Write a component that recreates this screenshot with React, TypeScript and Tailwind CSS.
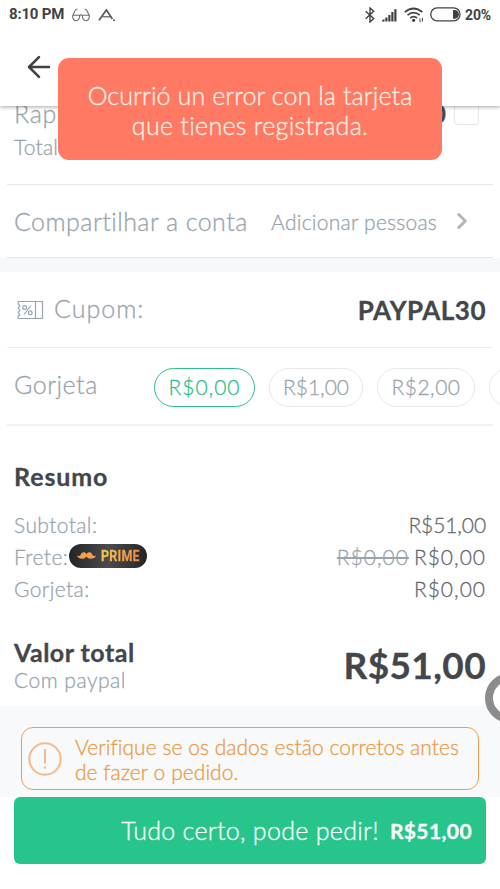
import { useState } from 'react';
import { ArrowLeft, ChevronRight } from 'lucide-react';

const GORJETAS = [
  { id: 0, label: 'R$0,00', style: 'w-[101px] tracking-[1px]' },
  { id: 1, label: 'R$1,00', style: 'w-[94px] tracking-[0px]' },
  { id: 2, label: 'R$2,00', style: 'w-[98px] tracking-[0.5px]' },
  { id: 3, label: '', style: 'w-[98px]' },
];

function StatusBar() {
  return (
    <div className="flex h-7 items-center pl-[9px] pr-[8px] pt-[1px] font-['Roboto',sans-serif] text-[15px] font-bold leading-none text-[#3f4244]">
      <span className="w-[55px] whitespace-nowrap tracking-[-0.2px]">8:10 PM</span>
      <svg className="ml-[8px]" width="18" height="14" viewBox="0 0 18 14" fill="none" stroke="#6b6e70" strokeWidth="1.1">
        <path d="M.6 7.300h7.200q1.200-.9 2.400 0h7.200c.3 7.200-6.700 7.200-7.200 0M.6 7.300c-.3 7.200 6.700 7.200 7.200 0M1 7L3.500 1.800 5.300 1M17 7L14.500 1.800 12.700 1" />
      </svg>
      <svg className="ml-[8px]" width="18" height="14" viewBox="0 0 18 14" fill="none" stroke="#55585a" strokeWidth="1.7">
        <path d="M1 12.300L8.400 2l6 9" />
        <path d="M4.500 8.800h8" strokeWidth="1.200" />
        <circle cx="16" cy="12.300" r="1" fill="#55585a" stroke="none" />
      </svg>
      <div className="ml-auto flex items-center">
        <svg width="10" height="16" viewBox="0 0 10 16" fill="none" stroke="#3f4244" strokeWidth="1.4">
          <path d="M.7 4.200l8 7.400L5 15V1l3.700 3.300-8 7.400" />
        </svg>
        <svg className="ml-[7px]" width="15" height="14" viewBox="0 0 15 14" fill="#3f4244">
          <path d="M0 13.500v-1.200l2.500-1.200v2.400zM3.300 9.600h2.200v3.900H3.300zM6.300 7h2.200v6.500H6.300zM9.300 4h2.200v9.500H9.300zM12.300 1.200h2.200v12.300h-2.200z" />
        </svg>
        <svg className="ml-[7px]" width="20" height="16" viewBox="0 0 20 16" fill="none" stroke="#3f4244" strokeWidth="1.7">
          <path d="M.8 5.200q8.800-7.400 17.600 0M3.500 8.200q6.100-5 12.200 0M6.200 11q3.400-2.700 6.800 0" />
          <circle cx="9.600" cy="13.300" r="1.600" fill="#3f4244" stroke="none" />
          <path d="M16 11.500v3.500M18.400 11v3.500" strokeWidth="1" />
        </svg>
        <svg className="ml-[6px]" width="31" height="15" viewBox="0 0 31 15" fill="none">
          <rect x=".8" y=".9" width="29.200" height="13" rx="6.300" stroke="#3f4244" strokeWidth="1.300" />
          <path d="M23 3h1.500a4.300 4.300 0 010 8.800H23z" fill="#3f4244" />
        </svg>
        <span className="ml-[4px] w-[27px] text-[14px] tracking-[-0.1px]">20%</span>
      </div>
    </div>
  );
}

function PrimeBadge() {
  return (
    <span className="flex h-6 w-[78px] items-center rounded-full bg-gradient-to-r from-[#252527] via-[#4b4c50] to-[#252527] pl-2">
      <svg width="19" height="8" viewBox="0 0 19 8" fill="#f3a04a">
        <path d="M9.500 2.200C8-.4 4.800-.2 3.800 2.500 3 4.400 1.400 4.200 0 3.600c1.300 4 7.500 4.200 9.500.9 2 3.300 8.200 3.100 9.500-.9-1.400.6-3 .8-3.800-1.100C14.200-.2 11-.4 9.500 2.200z" />
      </svg>
      <span className="ml-[5px] inline-block w-[46px] origin-left scale-x-[0.84] bg-gradient-to-r from-[#fbc94b] to-[#ee8347] bg-clip-text font-['Roboto',sans-serif] text-[15px] font-bold leading-none tracking-[0.2px] text-transparent">
        PRIME
      </span>
    </span>
  );
}

function Resumo() {
  return (
    <section className="h-[280px] px-[14px] pt-[36px]">
      <h2 className="text-[25px] font-bold leading-[28px] tracking-[0.9px] text-[#43474b]">Resumo</h2>
      <div className="mt-[19px] text-[21px] leading-8 tracking-[0.4px] text-[#99a5ad]">
        <div className="flex justify-between">
          <span>Subtotal:</span>
          <span className="tracking-[-0.1px] text-[#646a70]">R$51,00</span>
        </div>
        <div className="flex items-center">
          <span className="w-[55px] whitespace-nowrap">Frete:</span>
          <span className="-mt-[2px]">
            <PrimeBadge />
          </span>
          <span className="ml-auto tracking-[1px] line-through">R$0,00</span>
          <span className="ml-[5px] tracking-[1px] text-[#646a70]">R$0,00</span>
        </div>
        <div className="flex justify-between">
          <span>Gorjeta:</span>
          <span className="tracking-[1px] text-[#646a70]">R$0,00</span>
        </div>
      </div>
      <div className="mt-[33px] flex items-center justify-between">
        <div>
          <p className="text-[25px] font-bold leading-[28px] tracking-[0.5px] text-[#43474b]">Valor total</p>
          <p className="text-[21px] leading-[28px] tracking-[0.5px] text-[#99a5ad]">Com paypal</p>
        </div>
        <span className="-mt-[2px] text-[37px] font-bold leading-[52px] tracking-[0.4px] text-[#43474b]">R$51,00</span>
      </div>
    </section>
  );
}

export default function App() {
  const [gorjeta, setGorjeta] = useState(0);

  return (
    <div className="relative flex h-[889px] w-[500px] flex-col overflow-hidden bg-white font-['Lato',sans-serif] font-light [-webkit-text-stroke:0.3px]">
      <header className="relative z-10 h-[106px] shrink-0 bg-white shadow-[0_1px_4px_rgba(0,0,0,0.35)] [-webkit-text-stroke:0px]">
        <StatusBar />
        <button className="ml-[22px] mt-[22px] block text-[#3f4244]">
          <ArrowLeft className="h-[34px] w-[34px]" strokeWidth={1.8} />
        </button>
      </header>

      {/* Previous row, scrolled under the header */}
      <div className="flex h-[78px] shrink-0 justify-between pl-[14px] pr-[21px]">
        <div className="text-[#99a5ad]">
          <p className="-mt-[7px] text-[25px] leading-[28px] tracking-[0.7px]">Rap</p>
          <p className="mt-[6px] text-[21px] leading-[28px] tracking-[0.2px]">Total</p>
        </div>
        <div className="flex">
          <span className="mt-[-8px] text-[24px] font-bold leading-[32px] text-[#43474b]">0</span>
          <span className="ml-[8px] h-[19px] w-[25px] rounded-b border border-t-0 border-[#e6e7e8]" />
        </div>
      </div>

      <div className="mx-[7px] flex h-[74px] shrink-0 items-center border-y border-[#e3e5e6] pl-[7px] pr-[22px] text-[#99a5ad]">
        <span className="pt-[2px] text-[25px] tracking-[0.45px]">Compartilhar a conta</span>
        <span className="ml-auto pt-[2px] text-[21px] tracking-[0.25px]">Adicionar pessoas</span>
        <ChevronRight className="-mr-1 ml-[12px] h-[26px] w-[26px] text-[#b4b6b8]" strokeWidth={2.8} />
      </div>
      <div className="h-[14px] shrink-0 bg-[#f7f8f9]" />

      <div className="mx-[7px] flex h-[76px] shrink-0 items-center border-b border-[#eceeef] px-[7px] text-[#99a5ad]">
        <svg className="ml-[3px]" width="27" height="20" viewBox="0 0 27 20" fill="none" stroke="currentColor" strokeWidth="1.2">
          <path d="M1.200 1.500h24.300v17H1.200v-2.500l1.700-1-1.700-2.500 1.700-2-1.700-2.500 1.700-2-1.700-2zM18.500 1.500v17" />
          <path d="M14 5.500L7 14.500" />
          <circle cx="7.600" cy="7.500" r="1.900" />
          <circle cx="13.200" cy="12.700" r="1.900" />
        </svg>
        <span className="-mt-[2px] ml-[10px] text-[25px] tracking-[1px]">Cupom:</span>
        <span className="ml-auto pt-[1px] text-[26px] font-bold tracking-[0.5px] text-[#43474b]">PAYPAL30</span>
      </div>

      <div className="relative flex h-[78px] shrink-0 items-center pl-[14px]">
        <span className="-mt-[4px] w-[140px] shrink-0 text-[25px] tracking-[0.5px] text-[#99a5ad]">Gorjeta</span>
        <div className="flex gap-[14px]">
          {GORJETAS.map((item) => (
            <button
              key={item.id}
              onClick={() => setGorjeta(item.id)}
              className={`flex h-[39px] shrink-0 items-center justify-center rounded-full border text-[21px] ${item.style} ${
                gorjeta === item.id ? 'border-[#2fbf87] text-[#2fbf87]' : 'border-[#e6e8ea] text-[#99a5ad]'
              }`}
            >
              {item.label}
            </button>
          ))}
        </div>
        <div className="absolute bottom-0 left-[7px] right-[7px] h-[2px] bg-[#f0f1f1]" />
      </div>

      <Resumo />

      <div className="h-[91px] shrink-0 bg-[#f7f9fa] px-[21px] pt-[21px]">
        <div className="flex h-[63px] items-center rounded-[12px] border border-[#ef9c4a] pl-[6px] text-[#ee9a47]">
          <svg width="34" height="34" viewBox="0 0 34 34" fill="none" stroke="#f6b988" strokeWidth="2">
            <circle cx="17" cy="17" r="15.700" />
            <path d="M17 7v14.500" />
            <circle cx="17" cy="25.500" r="1.300" fill="#f6b988" stroke="none" />
          </svg>
          <p className="ml-[13px] whitespace-nowrap pt-[1px] text-[21px] leading-[25px] tracking-[0.05px]">
            Verifique se os dados estão corretos antes
            <br />
            de fazer o pedido.
          </p>
        </div>
      </div>

      <button className="mx-[14px] flex h-[67px] shrink-0 items-center justify-end rounded-[6px] bg-[#27c58b] pr-[14px] text-white">
        <span className="text-[25px] tracking-[0.3px]">Tudo certo, pode pedir!</span>
        <span className="ml-[11px] text-[21px] font-bold tracking-[0.4px]">R$51,00</span>
      </button>

      {/* Floating assist button, half off screen */}
      <div className="absolute left-[485px] top-[673px] z-20 h-[50px] w-[50px] rounded-full border-[8px] border-[#8b8c8d] bg-white" />

      <div className="absolute left-[58px] top-[58px] z-20 flex h-[102px] w-[384px] items-center justify-center rounded-[11px] bg-[#ff7963] text-center text-[25px] leading-[30px] text-[#fff1ea]">
        <p className="whitespace-nowrap pt-[1px]">
          <span className="tracking-[0.1px]">Ocurrió un error con la tarjeta</span>
          <br />
          <span className="tracking-[0.3px]">que tienes registrada.</span>
        </p>
      </div>
    </div>
  );
}
